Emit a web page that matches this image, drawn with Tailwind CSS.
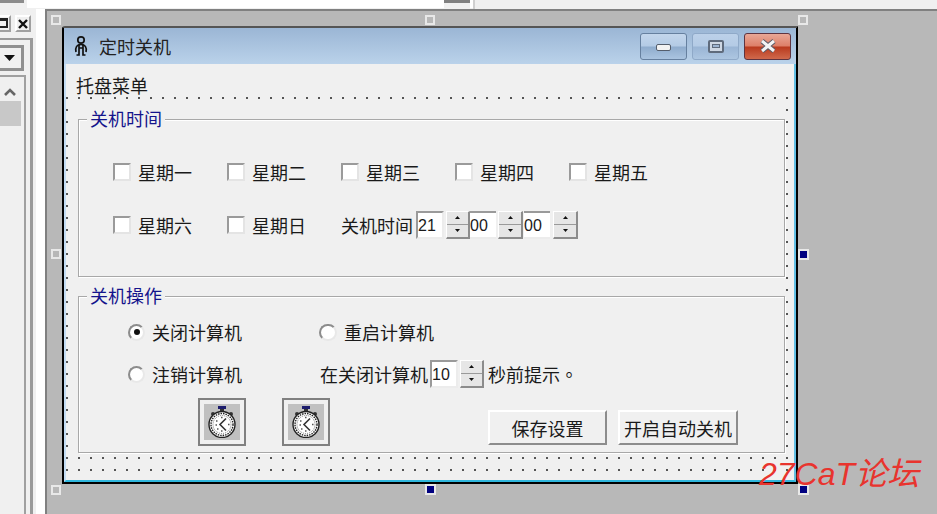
<!DOCTYPE html>
<html lang="zh">
<head>
  <meta charset="UTF-8" />
  <title>定时关机</title>
  <script src="https://cdn.jsdelivr.net/npm/@tailwindcss/browser@4"></script>
</head>
<body class="relative w-[937px] h-[514px] overflow-hidden bg-[#f0f0f0] text-[#1a1a1a] text-[18px] leading-[24px] font-['Noto_Sans_CJK_SC','Liberation_Sans',sans-serif]">

  <!-- Top strip -->
  <div class="flex h-[9px] overflow-hidden">
    <div class="w-[24px] h-[3px] bg-[#8c8c8c]"></div>
    <div class="ml-[3px] w-[417px] h-[8px] bg-white"></div>
    <div class="w-[26px] h-[3px] bg-[#808080]"></div>
    <div class="w-[3px] h-[8px] bg-white"></div>
    <div class="w-[2px] h-[9px] bg-[#d0d0d0]"></div>
  </div>

  <div class="flex h-[505px]">
    <!-- Left pane -->
    <div class="flex w-[45px] shrink-0">
      <div class="w-[36px] shrink-0">
        <div class="flex mt-[6px] h-[17px]">
          <div class="w-[11px] h-[17px] border-y-2 border-r-2 border-t-white border-r-[#a0a0a0] border-b-[#a0a0a0] overflow-hidden">
            <div class="w-[14px] h-[10px] mt-[1px] -ml-[6px] border-2 border-t-[3px] border-[#222]"></div>
          </div>
          <div class="ml-[4px] w-[16px] h-[17px] border-2 border-t-white border-l-white border-r-[#a0a0a0] border-b-[#a0a0a0] flex items-center justify-center">
            <svg width="10" height="10" viewBox="0 0 10 10"><path d="M1 1l8 8M9 1l-8 8" stroke="#111" stroke-width="2.4" fill="none"/></svg>
          </div>
        </div>
        <div class="mt-[6px] h-[476px] w-[33px] border-t-2 border-r-[3px] border-[#9a9a9a] pt-[5px]">
          <div class="w-[24px] h-[26px] border-y-[3px] border-r-[3px] border-[#909090] flex items-center pl-[4px]">
            <svg width="11" height="6" viewBox="0 0 11 6"><path d="M0 0h11l-5.500 6z" fill="#111"/></svg>
          </div>
          <div class="mt-[4px] w-[26px] h-[440px] border-t-2 border-r-2 border-[#a0a0a0] pt-[11px]">
            <svg class="ml-[4px]" width="12" height="8" viewBox="0 0 12 8"><path d="M1 7l5-5 5 5" stroke="#666" stroke-width="2.600" fill="none"/></svg>
            <div class="mt-[5px] w-[21px] h-[25px] bg-[#c8c8c8]"></div>
          </div>
        </div>
      </div>
      <div class="w-[9px] bg-white"></div>
    </div>

    <!-- Designer canvas -->
    <div class="flex-1 bg-[#b8b8b8] border-l-2 border-t-2 border-[#808080] pl-[15px] pt-[15px]">

      <!-- Form window -->
      <div class="w-[736px] h-[458px] bg-[#f0f0f0] border-2 border-t-[#555555] border-black rounded-tl-[3px]">
        <div class="h-full border-x-2 border-b-2 border-l-[#c3dcf3] border-r-[#63bfe4] border-b-[#2fb6dc]">

          <!-- Title bar -->
          <div class="flex items-center h-[36px] -mx-[2px] pl-[9px] pr-[5px] bg-gradient-to-b from-[#9bb6d5] to-[#bad2ea]">
            <svg width="16" height="22" viewBox="0 0 16 22" fill="none" stroke="#111" stroke-width="1.700">
              <circle cx="8" cy="5" r="3.200"/>
              <path d="M3 17C2 12 4 9.500 8 9.500S14 12 13 17"/>
              <path d="M6 9.500V20H3.500M10 9.500V20h2.500M6 13h4"/>
            </svg>
            <span class="ml-[10px] text-[#222]">定时关机</span>
            <div class="ml-auto flex gap-[5px]">
              <div class="relative w-[47px] h-[27px] rounded-[3px] border border-[#66809f] bg-[linear-gradient(#c3d6ec_0%,#b4cbe5_48%,#8faccd_52%,#aac4e0_100%)] flex items-center justify-center">
                <div class="w-[15px] h-[7px] rounded-[2px] border border-[#555e6c] bg-[#f2f2f2] mt-[3px]"></div>
              </div>
              <div class="w-[47px] h-[27px] rounded-[3px] border border-[#8fa9c8] bg-[linear-gradient(#bcd1e9_0%,#b4cbe5_48%,#9ab5d5_52%,#adc6e1_100%)] flex items-center justify-center">
                <div class="w-[16px] h-[13px] rounded-[2px] border-2 border-[#5f6b7c] bg-[#cfd8e4] flex items-center justify-center">
                  <div class="w-[8px] h-[4px] border border-[#5f6b7c] bg-[#9fb6d2]"></div>
                </div>
              </div>
              <div class="w-[47px] h-[27px] rounded-[3px] border border-[#5f3440] bg-[linear-gradient(#e9a796_0%,#dd7f68_48%,#b93a1e_52%,#d0694c_100%)] flex items-center justify-center">
                <svg width="18" height="14" viewBox="0 0 18 14" fill="none">
                  <path d="M3 2l12 10M15 2L3 12" stroke="#5a5a66" stroke-width="5"/>
                  <path d="M3 2l12 10M15 2L3 12" stroke="#f4f4f4" stroke-width="3"/>
                </svg>
              </div>
            </div>
          </div>

          <!-- Menu -->
          <div class="h-[31px] pl-[10px] pt-[9px] leading-[24px]">托盘菜单</div>

          <!-- Dotted design surface -->
          <div class="h-[386px] pl-[6px] pt-[9px] bg-[radial-gradient(circle,#555555_0.8px,transparent_1.1px)] bg-[size:12px_12px] bg-[position:-5px_-3px]">
            <div class="w-[713px] h-[350px] bg-[#f0f0f0] pt-[15px] pl-[6px]">

              <!-- 关机时间 -->
              <div class="relative w-[707px] h-[158px] border border-[#a8a8a8] shadow-[inset_1px_1px_0_#ffffff,1px_1px_0_#ffffff] pt-[38px] pl-[34px]">
                <span class="absolute -top-[14px] left-[8px] px-[3px] bg-[#f0f0f0] text-[#14148c]">关机时间</span>
                <div class="grid grid-cols-[repeat(5,114px)] auto-rows-[28px] gap-y-[25px] items-center">
                  <label class="flex items-center"><span class="w-[18px] h-[18px] mr-[7px] bg-white border-2 border-t-[#9a9a9a] border-l-[#9a9a9a] border-r-[#e4e4e4] border-b-[#e4e4e4]"></span>星期一</label>
                  <label class="flex items-center"><span class="w-[18px] h-[18px] mr-[7px] bg-white border-2 border-t-[#9a9a9a] border-l-[#9a9a9a] border-r-[#e4e4e4] border-b-[#e4e4e4]"></span>星期二</label>
                  <label class="flex items-center"><span class="w-[18px] h-[18px] mr-[7px] bg-white border-2 border-t-[#9a9a9a] border-l-[#9a9a9a] border-r-[#e4e4e4] border-b-[#e4e4e4]"></span>星期三</label>
                  <label class="flex items-center"><span class="w-[18px] h-[18px] mr-[7px] bg-white border-2 border-t-[#9a9a9a] border-l-[#9a9a9a] border-r-[#e4e4e4] border-b-[#e4e4e4]"></span>星期四</label>
                  <label class="flex items-center"><span class="w-[18px] h-[18px] mr-[7px] bg-white border-2 border-t-[#9a9a9a] border-l-[#9a9a9a] border-r-[#e4e4e4] border-b-[#e4e4e4]"></span>星期五</label>
                  <label class="flex items-center"><span class="w-[18px] h-[18px] mr-[7px] bg-white border-2 border-t-[#9a9a9a] border-l-[#9a9a9a] border-r-[#e4e4e4] border-b-[#e4e4e4]"></span>星期六</label>
                  <label class="flex items-center"><span class="w-[18px] h-[18px] mr-[7px] bg-white border-2 border-t-[#9a9a9a] border-l-[#9a9a9a] border-r-[#e4e4e4] border-b-[#e4e4e4]"></span>星期日</label>
                  <div class="col-span-3 flex items-center">
                    <span>关机时间</span>
                    <div class="ml-[3px] w-[28px] h-[28px] bg-white border-2 border-t-[#9a9a9a] border-l-[#9a9a9a] border-r-[#ececec] border-b-[#ececec] font-['Liberation_Sans',sans-serif] text-[16px] leading-[26px]">21</div>
                    <div class="ml-[2px] w-[24px] h-[28px] flex flex-col border-t border-l border-white border-r-2 border-b-2 border-r-[#8c8c8c] border-b-[#8c8c8c]">
                      <div class="h-1/2 bg-[#e6e6e6] border-b border-[#9a9a9a] flex items-center justify-center"><svg width="5" height="3" viewBox="0 0 5 3"><path d="M2.500 0L5 3H0z" fill="#111"/></svg></div>
                      <div class="h-1/2 bg-[#e6e6e6] flex items-center justify-center"><svg width="5" height="3" viewBox="0 0 5 3"><path d="M0 0h5L2.500 3z" fill="#111"/></svg></div>
                    </div>
                    <div class="w-[26px] h-[28px] bg-white border-t-2 border-t-[#9a9a9a] border-b-2 border-b-[#ececec] font-['Liberation_Sans',sans-serif] text-[16px] leading-[26px]">00</div>
                    <div class="ml-[2px] w-[25px] h-[28px] flex flex-col border-t border-l border-white border-r-2 border-b-2 border-r-[#8c8c8c] border-b-[#8c8c8c]">
                      <div class="h-1/2 bg-[#e6e6e6] border-b border-[#9a9a9a] flex items-center justify-center"><svg width="5" height="3" viewBox="0 0 5 3"><path d="M2.500 0L5 3H0z" fill="#111"/></svg></div>
                      <div class="h-1/2 bg-[#e6e6e6] flex items-center justify-center"><svg width="5" height="3" viewBox="0 0 5 3"><path d="M0 0h5L2.500 3z" fill="#111"/></svg></div>
                    </div>
                    <div class="ml-[1px] w-[26px] h-[28px] bg-white border-t-2 border-t-[#9a9a9a] border-b-2 border-b-[#ececec] font-['Liberation_Sans',sans-serif] text-[16px] leading-[26px]">00</div>
                    <div class="ml-[3px] w-[25px] h-[28px] flex flex-col border-t border-l border-white border-r-2 border-b-2 border-r-[#8c8c8c] border-b-[#8c8c8c]">
                      <div class="h-1/2 bg-[#e6e6e6] border-b border-[#9a9a9a] flex items-center justify-center"><svg width="5" height="3" viewBox="0 0 5 3"><path d="M2.500 0L5 3H0z" fill="#111"/></svg></div>
                      <div class="h-1/2 bg-[#e6e6e6] flex items-center justify-center"><svg width="5" height="3" viewBox="0 0 5 3"><path d="M0 0h5L2.500 3z" fill="#111"/></svg></div>
                    </div>
                  </div>
                </div>
              </div>

              <!-- 关机操作 -->
              <div class="relative mt-[19px] w-[707px] h-[157px] border border-[#a8a8a8] shadow-[inset_1px_1px_0_#ffffff,1px_1px_0_#ffffff] pt-[21px]">
                <span class="absolute -top-[14px] left-[8px] px-[3px] bg-[#f0f0f0] text-[#14148c]">关机操作</span>
                <div class="pl-[49px] grid grid-cols-[191px_1fr] auto-rows-[28px] gap-y-[14px] items-center">
                  <label class="flex items-center"><span class="w-[17px] h-[17px] mr-[7px] rounded-full bg-white border-2 border-t-[#8c8c8c] border-l-[#8c8c8c] border-r-[#e8e8e8] border-b-[#e8e8e8] flex items-center justify-center"><span class="w-[6px] h-[6px] rounded-full bg-[#111]"></span></span>关闭计算机</label>
                  <label class="flex items-center"><span class="w-[18px] h-[17px] mr-[7px] rounded-full bg-white border-2 border-t-[#8c8c8c] border-l-[#8c8c8c] border-r-[#e8e8e8] border-b-[#e8e8e8]"></span>重启计算机</label>
                  <label class="flex items-center"><span class="w-[17px] h-[17px] mr-[7px] rounded-full bg-white border-2 border-t-[#8c8c8c] border-l-[#8c8c8c] border-r-[#e8e8e8] border-b-[#e8e8e8]"></span>注销计算机</label>
                  <div class="flex items-center pl-[1px]">
                    <span>在关闭计算机</span>
                    <div class="ml-[2px] w-[28px] h-[28px] bg-white border-2 border-t-[#9a9a9a] border-l-[#9a9a9a] border-r-[#ececec] border-b-[#ececec] font-['Liberation_Sans',sans-serif] text-[16px] leading-[26px]">10</div>
                    <div class="ml-[2px] w-[24px] h-[28px] flex flex-col border-t border-l border-white border-r-2 border-b-2 border-r-[#8c8c8c] border-b-[#8c8c8c]">
                      <div class="h-1/2 bg-[#e6e6e6] border-b border-[#9a9a9a] flex items-center justify-center"><svg width="5" height="3" viewBox="0 0 5 3"><path d="M2.500 0L5 3H0z" fill="#111"/></svg></div>
                      <div class="h-1/2 bg-[#e6e6e6] flex items-center justify-center"><svg width="5" height="3" viewBox="0 0 5 3"><path d="M0 0h5L2.500 3z" fill="#111"/></svg></div>
                    </div>
                    <span lang="zh-TW" class="ml-[4px] font-['Noto_Sans_CJK_TC',sans-serif]">秒前提示。</span>
                  </div>
                </div>
                <div class="flex items-end mt-[10px] ml-[119px]">
                  <button class="w-[48px] h-[48px] border-2 border-[#808080] flex items-center justify-center">
                    <span class="w-[36px] h-[36px] bg-[#c0c0c0] flex items-center justify-center">
                      <svg width="28" height="32" viewBox="0 0 28 32">
                        <rect x="10" y="0" width="8" height="3" fill="#1c1c6c"/>
                        <rect x="12" y="3" width="4" height="3" fill="#333"/>
                        <circle cx="5" cy="8" r="2" fill="#333"/><circle cx="23" cy="8" r="2" fill="#333"/>
                        <circle cx="14" cy="18.500" r="13" fill="#fff" stroke="#222" stroke-width="1.400"/>
                        <circle cx="14" cy="18.500" r="11" fill="none" stroke="#222" stroke-width="1.400" stroke-dasharray="1.500 1"/>
                        <circle cx="14" cy="18.500" r="9" fill="none" stroke="#777" stroke-width="1" stroke-dasharray="1 1"/>
                        <path d="M18 12.500l-6 6 6 6" fill="none" stroke="#333" stroke-width="1.600"/>
                        <path d="M8 15h1.500M7.500 19h1.500M9 23h1.500M13 11.500h1.500M13 25h1.500M20 18.500h1.500" stroke="#555" stroke-width="1.500"/>
                      </svg>
                    </span>
                  </button>
                  <button class="ml-[36px] w-[48px] h-[48px] border-2 border-[#808080] flex items-center justify-center">
                    <span class="w-[36px] h-[36px] bg-[#c0c0c0] flex items-center justify-center">
                      <svg width="28" height="32" viewBox="0 0 28 32">
                        <rect x="10" y="0" width="8" height="3" fill="#1c1c6c"/>
                        <rect x="12" y="3" width="4" height="3" fill="#333"/>
                        <circle cx="5" cy="8" r="2" fill="#333"/><circle cx="23" cy="8" r="2" fill="#333"/>
                        <circle cx="14" cy="18.500" r="13" fill="#fff" stroke="#222" stroke-width="1.400"/>
                        <circle cx="14" cy="18.500" r="11" fill="none" stroke="#222" stroke-width="1.400" stroke-dasharray="1.500 1"/>
                        <circle cx="14" cy="18.500" r="9" fill="none" stroke="#777" stroke-width="1" stroke-dasharray="1 1"/>
                        <path d="M18 12.500l-6 6 6 6" fill="none" stroke="#333" stroke-width="1.600"/>
                        <path d="M8 15h1.500M7.500 19h1.500M9 23h1.500M13 11.500h1.500M13 25h1.500M20 18.500h1.500" stroke="#555" stroke-width="1.500"/>
                      </svg>
                    </span>
                  </button>
                  <button class="ml-[158px] mb-[1px] w-[119px] h-[35px] border-2 border-t-white border-l-white border-r-[#8c8c8c] border-b-[#8c8c8c]">保存设置</button>
                  <button class="ml-[11px] mb-[1px] w-[120px] h-[35px] border-2 border-t-white border-l-white border-r-[#8c8c8c] border-b-[#8c8c8c] whitespace-nowrap">开启自动关机</button>
                </div>
              </div>

            </div>
          </div>
        </div>
      </div>
    </div>
  </div>

  <!-- Selection handles -->
  <div class="absolute left-[51px] top-[15px] w-[10px] h-[10px] border-2 border-[#e8e8e8]"></div>
  <div class="absolute left-[425px] top-[15px] w-[10px] h-[10px] border-2 border-[#e8e8e8]"></div>
  <div class="absolute left-[798px] top-[15px] w-[10px] h-[10px] border-2 border-[#e8e8e8]"></div>
  <div class="absolute left-[51px] top-[249px] w-[10px] h-[10px] border-2 border-[#e8e8e8]"></div>
  <div class="absolute left-[798px] top-[249px] w-[11px] h-[11px] border-2 border-[#e8e8e8] bg-[#000080]"></div>
  <div class="absolute left-[51px] top-[485px] w-[10px] h-[10px] border-2 border-[#e8e8e8]"></div>
  <div class="absolute left-[425px] top-[484px] w-[11px] h-[11px] border-2 border-[#e8e8e8] bg-[#000080]"></div>
  <div class="absolute left-[798px] top-[484px] w-[11px] h-[11px] border-2 border-[#e8e8e8] bg-[#000080]"></div>

  <!-- Watermark -->
  <div class="absolute left-[759px] top-[452px] text-[32px] leading-[44px] text-[#e8342e] italic whitespace-nowrap font-['Liberation_Sans','Noto_Sans_CJK_SC',sans-serif]">27CaT论坛</div>

</body>
</html>
